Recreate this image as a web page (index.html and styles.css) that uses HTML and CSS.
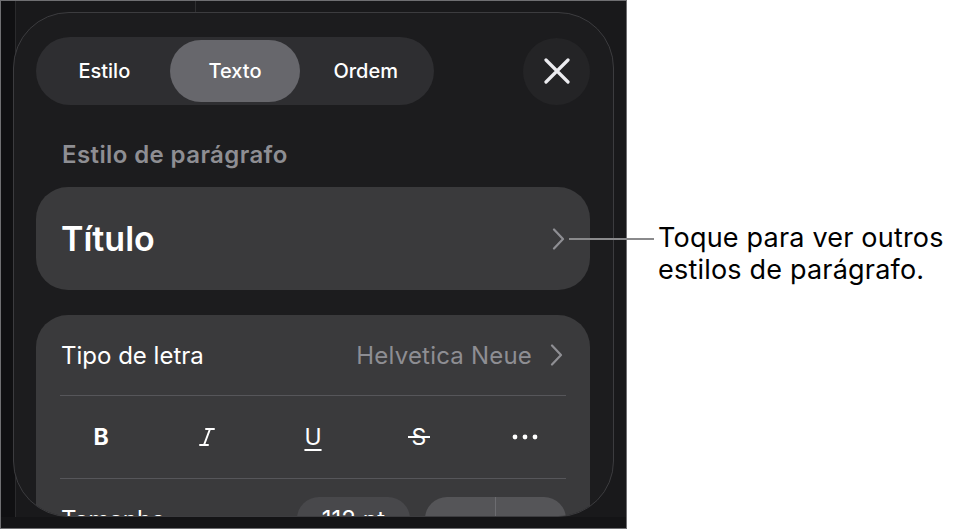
FILE: index.html
```html
<!DOCTYPE html>
<html lang="pt">
<head>
<meta charset="utf-8">
<title>Texto</title>
<link rel="stylesheet" href="styles.css">
</head>
<body>
<div class="page">
  <div class="screen">
    <div class="sheet">
      <div class="header">
        <div class="segmented">
          <div class="seg">Estilo</div>
          <div class="seg active">Texto</div>
          <div class="seg">Ordem</div>
        </div>
        <div class="close">
          <svg width="26" height="26" viewBox="0 0 26 26"><path d="M2 2 L24 24 M24 2 L2 24" stroke="#ececf0" stroke-width="3.2" stroke-linecap="round" fill="none"/></svg>
        </div>
      </div>
      <div class="section-label">Estilo de parágrafo</div>
      <div class="card title-card">
        <span class="title">Título</span>
        <svg class="chev" width="13" height="22" viewBox="0 0 13 22"><path d="M2 1.5 L11 11 L2 20.5" stroke="#8e8e93" stroke-width="2.2" stroke-linecap="round" stroke-linejoin="round" fill="none"/></svg>
      </div>
      <div class="card list-card">
        <div class="row font-row">
          <span class="row-label">Tipo de letra</span>
          <span class="value">Helvetica Neue
            <svg class="chev" width="13" height="22" viewBox="0 0 13 22"><path d="M2 1.5 L11 11 L2 20.5" stroke="#8e8e93" stroke-width="2.2" stroke-linecap="round" stroke-linejoin="round" fill="none"/></svg>
          </span>
        </div>
        <div class="row format-row">
          <div class="fmt"><span class="bold">B</span></div>
          <div class="fmt">
            <svg width="16" height="20" viewBox="0 0 16 20"><path d="M7 2 H15 M1 18 H9 M11 2 L5 18" stroke="#fff" stroke-width="2" stroke-linecap="round" fill="none"/></svg>
          </div>
          <div class="fmt"><span class="under">U</span></div>
          <div class="fmt"><span class="strike">S</span></div>
          <div class="fmt">
            <svg width="26" height="6" viewBox="0 0 26 6"><circle cx="3" cy="3" r="2.4" fill="#fff"/><circle cx="13" cy="3" r="2.4" fill="#fff"/><circle cx="23" cy="3" r="2.4" fill="#fff"/></svg>
          </div>
        </div>
        <div class="row size-row">
          <span class="row-label">Tamanho</span>
          <div class="size-controls">
            <div class="pt-pill">112 pt</div>
            <div class="stepper">
              <span class="step">−</span>
              <span class="step">+</span>
            </div>
          </div>
        </div>
      </div>
    </div>
  </div>
  <div class="callout">Toque para ver outros<br>estilos de parágrafo.</div>
  <div class="leader"></div>
</div>
</body>
</html>
```
FILE: styles.css
```css
* { box-sizing: border-box; }

html, body {
  margin: 0;
  padding: 0;
  background: #ffffff;
}

body {
  font-family: "Inter", "Noto Sans", sans-serif;
}

.page {
  position: relative;
  display: flex;
  width: 955px;
  height: 529px;
}

.screen {
  width: 627px;
  height: 529px;
  flex-shrink: 0;
  border: 1px solid #6f6f72;
  padding: 11px 12px 0 12px;
  background:
    linear-gradient(#2f2f31, #2f2f31) 194px 0 / 1px 11px no-repeat,
    linear-gradient(to bottom, transparent 516px, #141416 516px),
    linear-gradient(to right, #101012 14px, #2a2a2c 14px, #2a2a2c 15px, #19191b 15px);
}

.sheet {
  width: 601px;
  height: 505px;
  border: 1px solid #3c3c3f;
  border-radius: 56px;
  background: #1c1c1e;
  overflow: hidden;
  padding: 24px 23px 0 22px;
  display: flex;
  flex-direction: column;
}

.header {
  height: 68px;
  display: flex;
  align-items: center;
  justify-content: space-between;
  flex-shrink: 0;
}

.segmented {
  width: 398px;
  height: 68px;
  border-radius: 34px;
  background: #2e2e31;
  padding: 3px;
  display: flex;
}

.seg {
  flex: 1;
  display: flex;
  align-items: center;
  justify-content: center;
  border-radius: 32px;
  color: #ffffff;
  font-size: 20px;
  font-weight: 500;
}

.seg.active {
  background: #67676c;
}

.close {
  width: 67px;
  height: 67px;
  border-radius: 50%;
  background: #242426;
  display: flex;
  align-items: center;
  justify-content: center;
}

.section-label {
  margin-top: 37px;
  padding-left: 26px;
  font-size: 24px;
  line-height: 26px;
  font-weight: 600;
  letter-spacing: 0.4px;
  color: #8e8e93;
  flex-shrink: 0;
}

.card {
  background: #3a3a3c;
  border-radius: 32px;
  flex-shrink: 0;
}

.title-card {
  margin-top: 19px;
  height: 103px;
  padding: 0 25px;
  display: flex;
  align-items: center;
  justify-content: space-between;
}

.title {
  font-size: 34px;
  line-height: 40px;
  font-weight: 600;
  color: #ffffff;
}

.chev { display: block; }

.list-card {
  margin-top: 25px;
  padding: 0 24px;
}

.row {
  display: flex;
  align-items: center;
  justify-content: space-between;
}

.font-row {
  height: 81px;
  border-bottom: 1px solid #56565a;
}

.row-label {
  font-size: 24px;
  color: #ffffff;
  padding-left: 1px;
}

.value {
  display: flex;
  align-items: center;
  gap: 18px;
  font-size: 24px;
  letter-spacing: 0.2px;
  color: #8e8e93;
  padding-right: 3px;
}

.format-row {
  height: 83px;
  border-bottom: 1px solid #56565a;
}

.fmt {
  width: 82px;
  display: flex;
  align-items: center;
  justify-content: center;
  color: #ffffff;
}

.fmt svg { display: block; }

.bold {
  font-size: 23px;
  font-weight: 700;
}

.under {
  font-size: 23px;
  font-weight: 400;
  text-decoration: underline;
  text-decoration-thickness: 2px;
  text-underline-offset: 4px;
}

.strike {
  position: relative;
  font-size: 23px;
  font-weight: 400;
}

.strike::after {
  content: "";
  position: absolute;
  left: -4px;
  right: -4px;
  top: 50%;
  height: 2px;
  margin-top: -1px;
  background: #ffffff;
}

.size-row {
  height: 80px;
}

.size-controls {
  display: flex;
  gap: 15px;
}

.pt-pill {
  width: 113px;
  height: 44px;
  border-radius: 22px;
  background: #48484b;
  color: #ffffff;
  font-size: 24px;
  display: flex;
  align-items: center;
  justify-content: center;
}

.stepper {
  width: 141px;
  height: 44px;
  border-radius: 22px;
  background: #555558;
  display: flex;
}

.step {
  flex: 1;
  display: flex;
  align-items: center;
  justify-content: center;
  color: #ffffff;
  font-size: 26px;
}

.step + .step {
  border-left: 1px solid #6c6c70;
}

.callout {
  padding: 222px 0 0 31px;
  font-size: 27px;
  line-height: 32px;
  letter-spacing: 0.2px;
  color: #000000;
}

.leader {
  position: absolute;
  left: 569px;
  top: 238px;
  width: 85px;
  height: 2px;
  background: #8a8a8c;
}
```
